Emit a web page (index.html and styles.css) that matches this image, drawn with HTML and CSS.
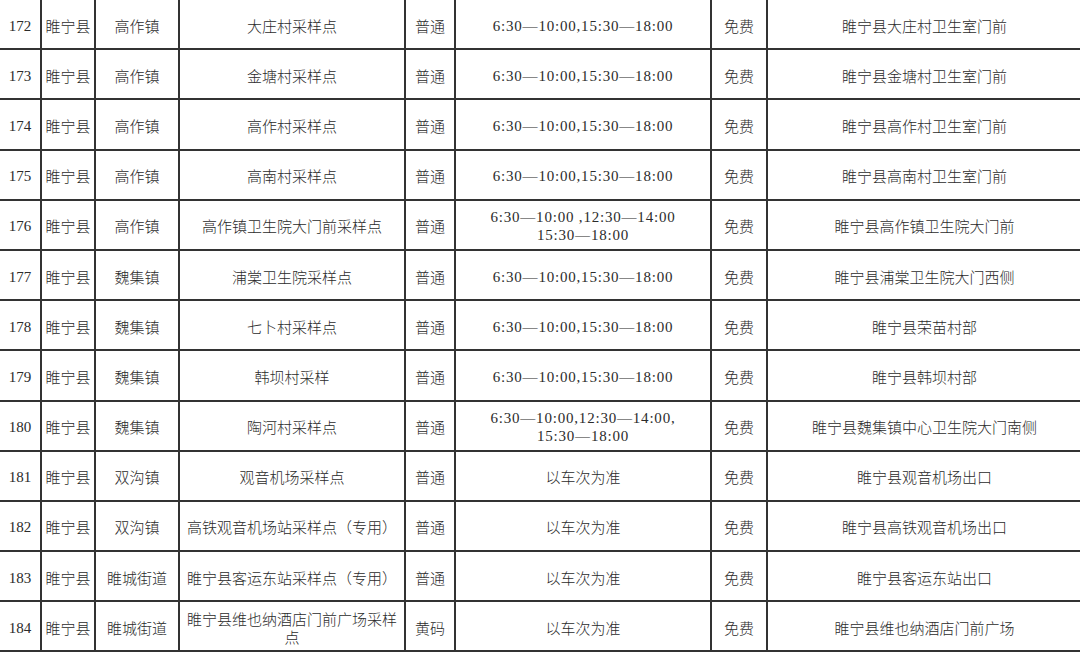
FILE: index.html
```html
<!DOCTYPE html>
<html lang="zh-CN">
<head>
<meta charset="utf-8">
<link rel="stylesheet" href="styles.css">
</head>
<body>
<table class="sites">
  <colgroup>
    <col class="c-no"><col class="c-county"><col class="c-town"><col class="c-site"><col class="c-type"><col class="c-time"><col class="c-fee"><col class="c-addr">
  </colgroup>
  <tbody>
    <tr><td class="num">172</td><td class="county">睢宁县</td><td>高作镇</td><td>大庄村采样点</td><td>普通</td><td class="time">6:30—10:00,15:30—18:00</td><td>免费</td><td>睢宁县大庄村卫生室门前</td></tr>
    <tr><td class="num">173</td><td class="county">睢宁县</td><td>高作镇</td><td>金塘村采样点</td><td>普通</td><td class="time">6:30—10:00,15:30—18:00</td><td>免费</td><td>睢宁县金塘村卫生室门前</td></tr>
    <tr><td class="num">174</td><td class="county">睢宁县</td><td>高作镇</td><td>高作村采样点</td><td>普通</td><td class="time">6:30—10:00,15:30—18:00</td><td>免费</td><td>睢宁县高作村卫生室门前</td></tr>
    <tr><td class="num">175</td><td class="county">睢宁县</td><td>高作镇</td><td>高南村采样点</td><td>普通</td><td class="time">6:30—10:00,15:30—18:00</td><td>免费</td><td>睢宁县高南村卫生室门前</td></tr>
    <tr><td class="num">176</td><td class="county">睢宁县</td><td>高作镇</td><td>高作镇卫生院大门前采样点</td><td>普通</td><td class="time">6:30—10:00 ,12:30—14:00<br>15:30—18:00</td><td>免费</td><td>睢宁县高作镇卫生院大门前</td></tr>
    <tr><td class="num">177</td><td class="county">睢宁县</td><td>魏集镇</td><td>浦棠卫生院采样点</td><td>普通</td><td class="time">6:30—10:00,15:30—18:00</td><td>免费</td><td>睢宁县浦棠卫生院大门西侧</td></tr>
    <tr><td class="num">178</td><td class="county">睢宁县</td><td>魏集镇</td><td>七卜村采样点</td><td>普通</td><td class="time">6:30—10:00,15:30—18:00</td><td>免费</td><td>睢宁县荣苗村部</td></tr>
    <tr><td class="num">179</td><td class="county">睢宁县</td><td>魏集镇</td><td>韩坝村采样</td><td>普通</td><td class="time">6:30—10:00,15:30—18:00</td><td>免费</td><td>睢宁县韩坝村部</td></tr>
    <tr><td class="num">180</td><td class="county">睢宁县</td><td>魏集镇</td><td>陶河村采样点</td><td>普通</td><td class="time">6:30—10:00,12:30—14:00,<br>15:30—18:00</td><td>免费</td><td>睢宁县魏集镇中心卫生院大门南侧</td></tr>
    <tr><td class="num">181</td><td class="county">睢宁县</td><td>双沟镇</td><td>观音机场采样点</td><td>普通</td><td>以车次为准</td><td>免费</td><td>睢宁县观音机场出口</td></tr>
    <tr><td class="num">182</td><td class="county">睢宁县</td><td>双沟镇</td><td>高铁观音机场站采样点（专用）</td><td>普通</td><td>以车次为准</td><td>免费</td><td>睢宁县高铁观音机场出口</td></tr>
    <tr><td class="num">183</td><td class="county">睢宁县</td><td>睢城街道</td><td>睢宁县客运东站采样点（专用）</td><td>普通</td><td>以车次为准</td><td>免费</td><td>睢宁县客运东站出口</td></tr>
    <tr><td class="num">184</td><td class="county">睢宁县</td><td>睢城街道</td><td>睢宁县维也纳酒店门前广场采样点</td><td>黄码</td><td>以车次为准</td><td>免费</td><td>睢宁县维也纳酒店门前广场</td></tr>
  </tbody>
</table>
</body>
</html>
```
FILE: styles.css
```css
html, body {
  margin: 0;
  padding: 0;
  background: #ffffff;
}
body {
  width: 1080px;
  height: 654px;
  overflow: hidden;
  font-family: "Liberation Serif", "Noto Sans CJK SC", serif;
  color: #2b2b2b;
}
.sites {
  width: 1081px;
  table-layout: fixed;
  border-collapse: collapse;
  border: none;
  font-size: 15px;
  line-height: 18px;
}
.c-no { width: 41px; }
.c-county { width: 54px; }
.c-town { width: 84px; }
.c-site { width: 226px; }
.c-type { width: 50px; }
.c-time { width: 256px; }
.c-fee { width: 56px; }
.c-addr { width: 314px; }
.sites td {
  height: 45.2px;
  padding: 3px 6px 0;
  border: 2px solid #333333;
  text-align: center;
  vertical-align: middle;
  font-family: "Noto Sans CJK SC", sans-serif;
  font-weight: 300;
}
.sites tr:first-child td {
  border-top: none;
}
.sites td:first-child {
  border-left: none;
}
.sites td:last-child {
  border-right: none;
}
.sites td.num {
  font-family: "Liberation Serif", serif;
  font-weight: 400;
  padding: 3px 0 0;
}
.sites td.county {
  padding: 3px 2px 0;
}
.sites td.time {
  font-family: "Liberation Serif", "Noto Sans CJK SC", serif;
  font-weight: 400;
  letter-spacing: 0.8px;
}
```
